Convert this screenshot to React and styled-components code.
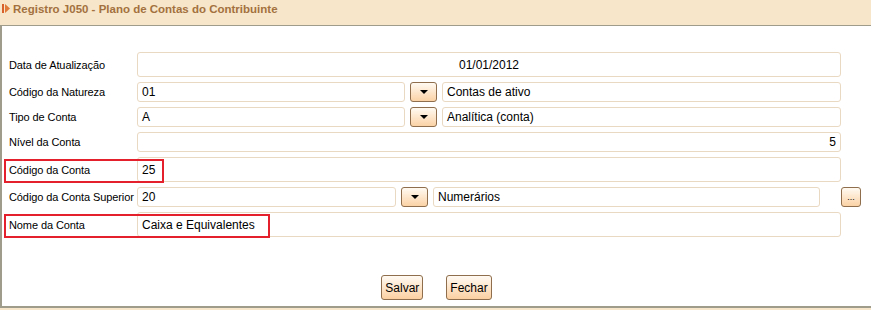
import React from "react";
import styled, { createGlobalStyle } from "styled-components";

const Global = createGlobalStyle`
  html, body {
    margin: 0;
    padding: 0;
    background: #f7e6c9;
    font-family: "Liberation Sans", Arial, sans-serif;
  }
`;

const Header = styled.div`
  background: #f7e6c9;
  border-bottom: 1px solid #a09c8c;
  display: flex;
  align-items: center;
  padding-left: 2px;
  gap: 2px;
  box-sizing: border-box;
  height: 26px;
  padding-bottom: 8px;

  h1 {
    margin: 0;
    font-size: 11.5px;
    font-weight: bold;
    color: #a3713f;
  }
`;

const Panel = styled.div`
  background: #fff;
  border-left: 2px solid #a09c8c;
  border-bottom: 2px solid #a09c8c;
  height: 282px;
  box-sizing: border-box;
  padding: 26px 30px 0 0;
  display: flex;
  flex-direction: column;
  gap: 5px;
`;

const Row = styled.div`
  position: relative;
  display: flex;
  align-items: center;
  height: ${(p) => p.h || 20}px;
`;

const Label = styled.div`
  width: 128px;
  padding-left: 7px;
  flex-shrink: 0;
  font-size: 11px;
  letter-spacing: -0.1px;
  white-space: nowrap;
  color: #000;
`;

const Field = styled.div`
  box-sizing: border-box;
  height: 100%;
  width: ${(p) => (p.w ? `${p.w}px` : "auto")};
  flex: ${(p) => (p.w ? "0 0 auto" : "1")};
  border: 1px solid #ead9c2;
  border-radius: 3px;
  display: flex;
  align-items: center;
  justify-content: ${(p) => p.align || "flex-start"};
  padding: 0 4px;
  font-size: 12px;
  color: #000;
`;

const Drop = styled.button`
  box-sizing: border-box;
  width: ${(p) => p.w || 27}px;
  height: 20px;
  margin: 0 5px;
  padding: 0;
  border: 1px solid #8e6e4c;
  border-radius: 3px;
  background: linear-gradient(#fffaf2, #fbd2a6);
  display: flex;
  align-items: center;
  justify-content: center;
  font-size: 9px;
  font-family: "Liberation Sans", Arial, sans-serif;
  color: #000;

  &::after {
    content: "";
    display: ${(p) => (p.dots ? "none" : "block")};
    border-left: 4px solid transparent;
    border-right: 4px solid transparent;
    border-top: 4px solid #000;
  }
`;

const Mark = styled.div`
  position: absolute;
  left: 2px;
  top: 2px;
  bottom: -1px;
  width: ${(p) => p.w}px;
  border: 2px solid #e3202b;
  pointer-events: none;
`;

const Actions = styled.div`
  display: flex;
  justify-content: center;
  gap: 23px;
  margin-top: 33px;
  padding-left: 30px;
`;

const Button = styled.button`
  box-sizing: border-box;
  height: 25px;
  padding: 0 3px;
  border: 1px solid #8e6e4c;
  border-radius: 3px;
  background: linear-gradient(#fffaf3, #fbd0a2);
  font-family: "Liberation Sans", Arial, sans-serif;
  font-size: 12px;
  color: #000;
`;

const Flag = () => (
  <svg width="9" height="9" viewBox="0 0 9 9">
    <rect x="0" y="0" width="2" height="9" fill="#d8602a" />
    <polygon points="3,0 8,4.5 3,9" fill="#e07a3a" />
  </svg>
);

export default function App() {
  return (
    <>
      <Global />
      <Header>
        <Flag />
        <h1>Registro J050 - Plano de Contas do Contribuinte</h1>
      </Header>
      <Panel>
        <Row h={25}>
          <Label>Data de Atualização</Label>
          <Field align="center">01/01/2012</Field>
        </Row>
        <Row>
          <Label>Código da Natureza</Label>
          <Field w={268}>01</Field>
          <Drop />
          <Field>Contas de ativo</Field>
        </Row>
        <Row>
          <Label>Tipo de Conta</Label>
          <Field w={268}>A</Field>
          <Drop />
          <Field>Analítica (conta)</Field>
        </Row>
        <Row>
          <Label>Nível da Conta</Label>
          <Field align="flex-end">5</Field>
        </Row>
        <Row h={25}>
          <Label>Código da Conta</Label>
          <Field>25</Field>
          <Mark w={156} />
        </Row>
        <Row>
          <Label>Código da Conta Superior</Label>
          <Field w={259}>20</Field>
          <Drop />
          <Field>Numerários</Field>
          <Drop w={20} dots style={{ marginLeft: 21, marginRight: -20 }}>...</Drop>
        </Row>
        <Row h={25}>
          <Label>Nome da Conta</Label>
          <Field>Caixa e Equivalentes</Field>
          <Mark w={262} />
        </Row>
        <Actions>
          <Button>Salvar</Button>
          <Button>Fechar</Button>
        </Actions>
      </Panel>
    </>
  );
}
